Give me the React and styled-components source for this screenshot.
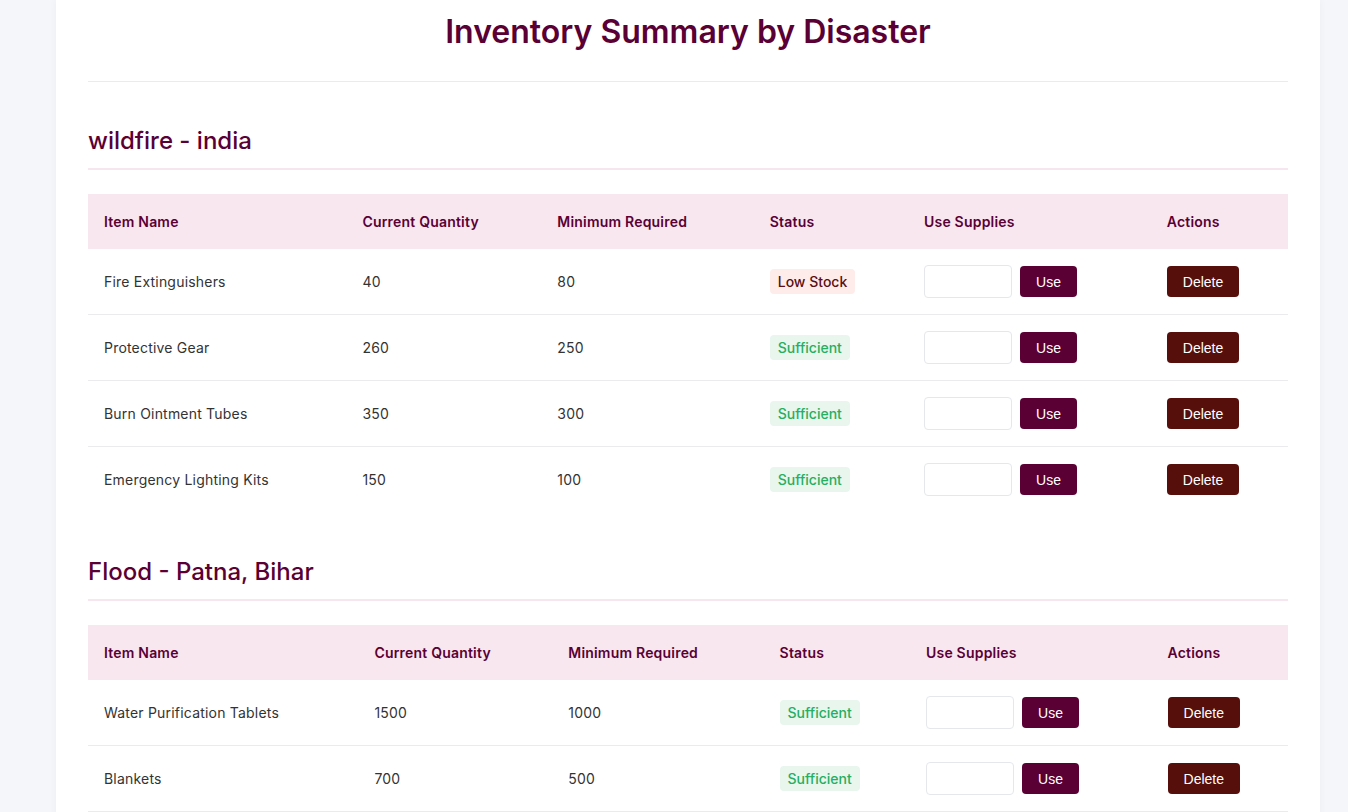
import React from 'react';
import styled, { createGlobalStyle } from 'styled-components';

const GlobalStyle = createGlobalStyle`
  html, body {
    margin: 0;
    padding: 0;
    background: #f5f6fa;
    font-family: Inter, "Noto Sans", sans-serif;
    color: #333;
  }
`;

const disasters = [
  {
    name: 'wildfire - india',
    items: [
      { name: 'Fire Extinguishers', qty: 40, min: 80 },
      { name: 'Protective Gear', qty: 260, min: 250 },
      { name: 'Burn Ointment Tubes', qty: 350, min: 300 },
      { name: 'Emergency Lighting Kits', qty: 150, min: 100 },
    ],
  },
  {
    name: 'Flood - Patna, Bihar',
    items: [
      { name: 'Water Purification Tablets', qty: 1500, min: 1000 },
      { name: 'Blankets', qty: 700, min: 500 },
      { name: 'Food Packets', qty: 2000, min: 1500 },
    ],
  },
];

export default function App() {
  return (
    <>
      <GlobalStyle />
      <Page>
        <Container>
          <Title>Inventory Summary by Disaster</Title>
          {disasters.map((d) => (
            <Section key={d.name}>
              <SectionTitle>{d.name}</SectionTitle>
              <Table>
                <thead>
                  <tr>
                    <Th>Item Name</Th>
                    <Th>Current Quantity</Th>
                    <Th>Minimum Required</Th>
                    <Th>Status</Th>
                    <Th>Use Supplies</Th>
                    <Th>Actions</Th>
                  </tr>
                </thead>
                <tbody>
                  {d.items.map((item) => {
                    const low = item.qty < item.min;
                    return (
                      <Row key={item.name}>
                        <Td>{item.name}</Td>
                        <Td>{item.qty}</Td>
                        <Td>{item.min}</Td>
                        <Td>
                          <Badge low={low}>{low ? 'Low Stock' : 'Sufficient'}</Badge>
                        </Td>
                        <Td>
                          <UseGroup>
                            <QtyInput type="number" />
                            <Button>Use</Button>
                          </UseGroup>
                        </Td>
                        <Td>
                          <Button danger>Delete</Button>
                        </Td>
                      </Row>
                    );
                  })}
                </tbody>
              </Table>
            </Section>
          ))}
        </Container>
      </Page>
    </>
  );
}

const Page = styled.div`
  padding: 0 28px 0 56px;
`;

const Container = styled.div`
  background: #fff;
  padding: 12px 32px 40px;
  box-shadow: 0 0 8px rgba(0, 0, 0, 0.04);
`;

const Title = styled.h1`
  margin: 0;
  padding-bottom: 30px;
  border-bottom: 1px solid #ebebee;
  text-align: center;
  font-size: 32px;
  line-height: 39px;
  font-weight: 600;
  color: #5a0035;
`;

const Section = styled.section`
  margin-top: 44px;
`;

const SectionTitle = styled.h2`
  margin: 0 0 24px;
  padding-bottom: 13px;
  border-bottom: 2px solid #f8e6ee;
  font-size: 24px;
  line-height: 29px;
  font-weight: 500;
  color: #5a0035;
`;

const Table = styled.table`
  width: 100%;
  border-collapse: collapse;
  font-size: 14px;
  letter-spacing: 0.2px;
`;

const Th = styled.th`
  background: #f8e7ef;
  color: #5a0035;
  text-align: left;
  font-weight: 600;
  padding: 0 16px;
  height: 55px;
`;

const Row = styled.tr`
  border-bottom: 1px solid #ebebee;

  &:last-child {
    border-bottom-color: transparent;
  }
`;

const Td = styled.td`
  padding: 0 16px;
  height: 65px;
  color: #333;
`;

const Badge = styled.span`
  display: inline-block;
  padding: 4px 8px;
  border-radius: 4px;
  font-weight: 500;
  letter-spacing: 0;
  background: ${(p) => (p.low ? '#fdecea' : '#e8f6ee')};
  color: ${(p) => (p.low ? '#5a0f12' : '#27ae60')};
`;

const UseGroup = styled.div`
  display: flex;
  align-items: center;
  gap: 8px;
`;

const QtyInput = styled.input`
  width: 88px;
  height: 33px;
  box-sizing: border-box;
  border: 1px solid #e5e7eb;
  border-radius: 4px;
  padding: 4px 8px;
  appearance: textfield;
  &::-webkit-inner-spin-button {
    display: none;
  }
`;

const Button = styled.button`
  font-family: "Liberation Sans", Arial, sans-serif;
  font-size: 14px;
  letter-spacing: 0;
  color: #fff;
  border: none;
  border-radius: 4px;
  height: 31px;
  padding: 0 16px;
  background: ${(p) => (p.danger ? '#560f0a' : '#5a0035')};
  cursor: pointer;
`;
